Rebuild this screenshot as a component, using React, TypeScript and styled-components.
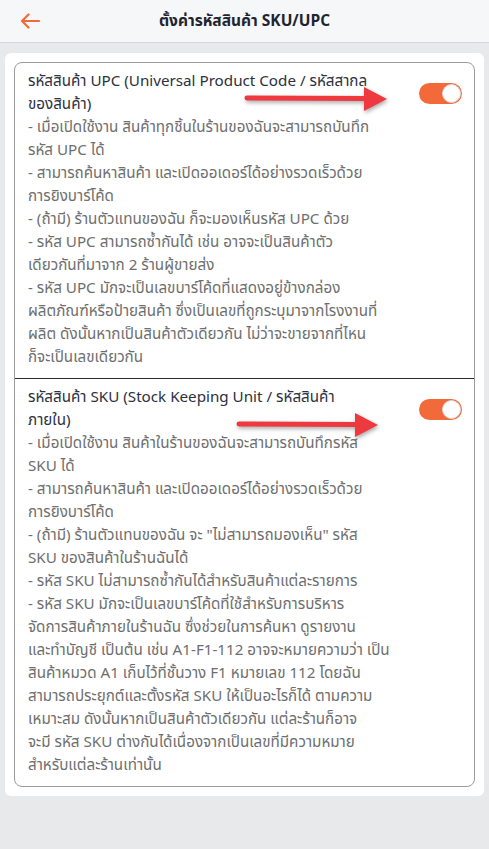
import * as React from 'react';
import styled, { createGlobalStyle } from 'styled-components';

const GlobalStyle = createGlobalStyle`
    html, body {
        margin: 0;
        padding: 0;
        background: #e8e9eb;
    }
    body {
        font-family: "Noto Sans Thai", "Noto Sans Thai UI", "Noto Sans", "DejaVu Sans", sans-serif;
    }
`;

const Page = styled.div`
    min-height: 849px;
    background: #e8e9eb;
`;

const Header = styled.header`
    height: 43px;
    box-sizing: border-box;
    background: #f6f7f9;
    border-bottom: 1px solid #d6d7da;
    display: grid;
    grid-template-columns: 56px 1fr 56px;
    align-items: center;
`;

const BackButton = styled.button`
    border: 0;
    background: none;
    padding: 0 0 0 20px;
    height: 42px;
    display: flex;
    align-items: center;
    cursor: pointer;
`;

const Title = styled.h1`
    margin: 0;
    text-align: center;
    font-size: 15.5px;
    font-weight: 700;
    color: #1f2430;
`;

const Content = styled.main`
    padding: 10px 5px;
`;

const Card = styled.div`
    background: #ffffff;
    border-radius: 6px;
    padding: 9px;
`;

const Box = styled.div`
    border: 1px solid #9c9c9c;
    border-radius: 8px;
`;

const Section = styled.section<{ $divided?: boolean }>`
    position: relative;
    padding: 7px 12px 9px 13px;
    border-top: ${p => (p.$divided ? '1px solid #2a2a2a' : 'none')};
`;

const HeadRow = styled.div`
    display: flex;
    align-items: center;
    justify-content: space-between;
`;

const SectionTitle = styled.div`
    font-size: 15.2px;
    line-height: 23px;
    color: #2b3140;
`;

const Desc = styled.div`
    font-size: 15.2px;
    line-height: 23px;
    color: #6e6e6e;
`;

const Line = styled.div`
    white-space: nowrap;
`;

const Track = styled.button<{ $on: boolean }>`
    position: relative;
    flex: none;
    width: 43px;
    height: 21px;
    border: 0;
    padding: 0;
    border-radius: 11px;
    background: ${p => (p.$on ? '#f26a3a' : '#cfd2d6')};
    cursor: pointer;
`;

const Knob = styled.span<{ $on: boolean }>`
    position: absolute;
    top: 1px;
    left: ${p => (p.$on ? '23px' : '1px')};
    width: 19px;
    height: 19px;
    box-sizing: border-box;
    border-radius: 50%;
    background: #ffffff;
    border: 1px solid #d9d9d9;
`;

const Pointer = styled.svg<{ $left: number; $top: number }>`
    position: absolute;
    left: ${p => p.$left}px;
    top: ${p => p.$top}px;
    overflow: visible;
    filter: drop-shadow(1px 2px 2px rgba(0, 0, 0, 0.35));
    pointer-events: none;
`;

const Toggle = ({ on }: { on: boolean }) => (
    <Track $on={on} aria-pressed={on}>
        <Knob $on={on} />
    </Track>
);

const RedArrow = ({ left, top, width }: { left: number; top: number; width: number }) => (
    <Pointer $left={left} $top={top} width={width} height={24} viewBox={`0 0 ${width} 24`}>
        <path d={`M2 11 L${width - 22} 11.5`} stroke="#ee3a3f" strokeWidth={5} strokeLinecap="round" />
        <polygon points={`${width - 23},0 ${width},12 ${width - 23},24`} fill="#ee3a3f" />
    </Pointer>
);

const upc = {
    title: ['รหัสสินค้า UPC (Universal Product Code / รหัสสากล', 'ของสินค้า)'],
    lines: [
        '- เมื่อเปิดใช้งาน สินค้าทุกชิ้นในร้านของฉันจะสามารถบันทึก',
        'รหัส UPC ได้',
        '- สามารถค้นหาสินค้า และเปิดออเดอร์ได้อย่างรวดเร็วด้วย',
        'การยิงบาร์โค้ด',
        '- (ถ้ามี) ร้านตัวแทนของฉัน ก็จะมองเห็นรหัส UPC ด้วย',
        '- รหัส UPC สามารถซ้ำกันได้ เช่น อาจจะเป็นสินค้าตัว',
        'เดียวกันที่มาจาก 2 ร้านผู้ขายส่ง',
        '- รหัส UPC มักจะเป็นเลขบาร์โค้ดที่แสดงอยู่ข้างกล่อง',
        'ผลิตภัณฑ์หรือป้ายสินค้า ซึ่งเป็นเลขที่ถูกระบุมาจากโรงงานที่',
        'ผลิต ดังนั้นหากเป็นสินค้าตัวเดียวกัน ไม่ว่าจะขายจากที่ไหน',
        'ก็จะเป็นเลขเดียวกัน',
    ],
};

const sku = {
    title: ['รหัสสินค้า SKU (Stock Keeping Unit / รหัสสินค้า', 'ภายใน)'],
    lines: [
        '- เมื่อเปิดใช้งาน สินค้าในร้านของฉันจะสามารถบันทึกรหัส',
        'SKU ได้',
        '- สามารถค้นหาสินค้า และเปิดออเดอร์ได้อย่างรวดเร็วด้วย',
        'การยิงบาร์โค้ด',
        '- (ถ้ามี) ร้านตัวแทนของฉัน จะ "ไม่สามารถมองเห็น" รหัส',
        'SKU ของสินค้าในร้านฉันได้',
        '- รหัส SKU ไม่สามารถซ้ำกันได้สำหรับสินค้าแต่ละรายการ',
        '- รหัส SKU มักจะเป็นเลขบาร์โค้ดที่ใช้สำหรับการบริหาร',
        'จัดการสินค้าภายในร้านฉัน ซึ่งช่วยในการค้นหา ดูรายงาน',
        'และทำบัญชี เป็นต้น เช่น A1-F1-112 อาจจะหมายความว่า เป็น',
        'สินค้าหมวด A1 เก็บไว้ที่ชั้นวาง F1 หมายเลข 112 โดยฉัน',
        'สามารถประยุกต์และตั้งรหัส SKU ให้เป็นอะไรก็ได้ ตามความ',
        'เหมาะสม ดังนั้นหากเป็นสินค้าตัวเดียวกัน แต่ละร้านก็อาจ',
        'จะมี รหัส SKU ต่างกันได้เนื่องจากเป็นเลขที่มีความหมาย',
        'สำหรับแต่ละร้านเท่านั้น',
    ],
};

const CodeSection = ({
    data,
    divided,
    arrow,
}: {
    data: { title: string[]; lines: string[] };
    divided?: boolean;
    arrow: { left: number; top: number; width: number };
}) => (
    <Section $divided={divided}>
        <HeadRow>
            <SectionTitle>
                {data.title.map(t => <Line key={t}>{t}</Line>)}
            </SectionTitle>
            <Toggle on={true} />
        </HeadRow>
        <Desc>
            {data.lines.map((t, i) => <Line key={i}>{t}</Line>)}
        </Desc>
        <RedArrow {...arrow} />
    </Section>
);

export default function App() {
    return (
        <Page>
            <GlobalStyle />
            <Header>
                <BackButton aria-label="back">
                    <svg width="20" height="16" viewBox="0 0 20 16">
                        <path d="M19 8 H2 M8.5 1.5 L2 8 L8.5 14.5" fill="none" stroke="#f26a3a" strokeWidth={2.2} strokeLinecap="round" strokeLinejoin="round" />
                    </svg>
                </BackButton>
                <Title>ตั้งค่ารหัสสินค้า SKU/UPC</Title>
                <span />
            </Header>
            <Content>
                <Card>
                    <Box>
                        <CodeSection data={upc} arrow={{ left: 230, top: 24, width: 142 }} />
                        <CodeSection data={sku} divided arrow={{ left: 222, top: 34, width: 141 }} />
                    </Box>
                </Card>
            </Content>
        </Page>
    );
}
